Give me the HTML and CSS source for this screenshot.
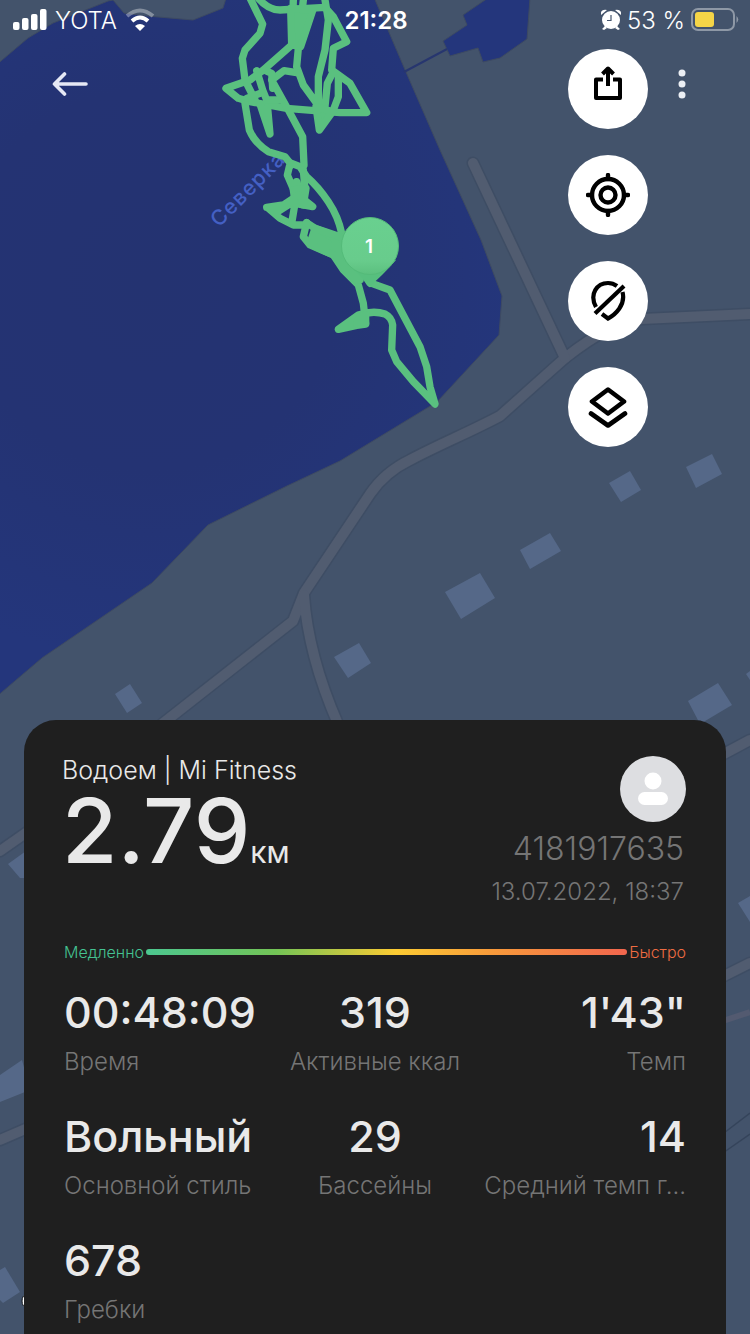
FILE: index.html
```html
<!DOCTYPE html>
<html lang="ru">
<head>
<meta charset="utf-8">
<meta name="viewport" content="width=device-width, initial-scale=1">
<title>Водоем | Mi Fitness</title>
<link rel="stylesheet" href="styles.css">
</head>
<body>
<div class="screen">
  <svg class="map" viewBox="0 0 750 1334" preserveAspectRatio="xMidYMin slice" role="img" aria-label="Карта заплыва">
    <defs>
      <radialGradient id="water" gradientUnits="userSpaceOnUse" cx="150" cy="280" r="380">
        <stop offset="0" stop-color="#243371"/>
        <stop offset=".5" stop-color="#243373"/>
        <stop offset="1" stop-color="#24367c"/>
      </radialGradient>
      <linearGradient id="pin" x1="0" y1="0" x2="0" y2="1">
        <stop offset="0" stop-color="#69d08f"/>
        <stop offset=".75" stop-color="#68cc8c"/>
        <stop offset="1" stop-color="#5cc07f"/>
      </linearGradient>
    </defs>
    <rect width="750" height="1334" fill="#43536b"/>
    <path class="water" fill="url(#water)" d="M-5 66 28 38 53 23 108 1 113 0 124 13 147 16 193 20 223 8 227 -5H373L400 58 406 72 440 150 481 240 502 296 499 335 437 402 340 461 287 486 208 525 152 583 42 658 -5 698Z"/>
    <path class="water" fill="#24367c" d="M488 -2 463 15 467 25 443 41 450 56 478 48 483 62 500 58 527 39 530 -2Z"/>
    <path d="M404 72 447 49" stroke="#27366f" stroke-width="2"/>
    <g class="road-edge">
      <path id="r1" d="M750 314 642 319 Q612 321 565 358L500 416C470 432 440 444 410 460 Q385 472 370 494L304 593 293 621 162 724"/>
      <path id="r2" d="M473 163 565 358"/>
      <path id="r3" d="M304 595 Q308 655 338 724"/>
      <path id="r4" d="M0 851 30 830M720 756 750 740M0 1140 30 1127M720 978 750 963"/>
    </g>
    <g class="road">
      <use href="#r1"/><use href="#r2"/><use href="#r3"/><use href="#r4"/>
    </g>
    <path d="M720 1022 750 1012" stroke="#535a70" stroke-width="6"/>
    <path d="M720 1136 750 1113M720 1155 750 1134" stroke="#35445b" stroke-width="1.5"/>
    <g fill="#556888">
      <path d="M609 483 630 471 641 490 621 502Z"/>
      <path d="M686 467 712 454 722 474 696 488Z"/>
      <path d="M520 550 550 533 561 551 530 569Z"/>
      <path d="M445 592 480 573 495 598 461 619Z"/>
      <path d="M334 657 359 643 371 663 348 678Z"/>
      <path d="M115 694 130 684 142 703 127 713Z"/>
      <path d="M688 701 718 683 732 705 700 724Z"/>
      <path d="M746 674 750 671V680Z"/>
      <path d="M8 864 26 851V878H20Z"/>
      <path d="M0 1075 22 1060 30 1090 0 1102Z"/>
      <path d="M0 1270 5 1267 20 1292 3 1303 0 1300Z"/>
      <path d="M738 903 750 896V922Z"/>
    </g>
    <ellipse cx="27" cy="1301" rx="5" ry="7" fill="#fff" stroke="#101418" stroke-width="1"/>
    <path id="river" d="M219 228 299 148" fill="none"/>
    <text class="river-name"><textPath href="#river">Северка</textPath></text>
    <g class="track" transform="translate(200 0) scale(.333333)">
      <path d="M148 -10Q165 25 188 72L180 100 135 150 127 175 135 240 165 300"/>
      <path d="M175 -5 Q205 30 240 30L375 22 400 50 440 125 400 145 395 210 450 250 500 338H420L260 325 150 305 115 295 78 265 150 240 190 210 275 135 280 0"/>
      <path d="M310 0 300 90 290 200 310 255 350 310M375 0 385 60 375 150 355 230V320"/>
      <path class="solid" d="M272 25 338 32 302 140 275 135Z"/>
      <path d="M400 215 382 250 375 320M415 235V290L400 330"/>
      <path class="solid" d="M348 320 398 335 358 390Z"/>
      <path d="M290 218 252 212 215 240 265 330 308 410 312 495M135 310 148 390Q165 430 205 455L255 470 275 495"/>
      <path d="M180 312 210 402 203 325M170 212 188 270 200 300 245 300M192 210 215 220 218 265M140 295 180 280"/>
      <path d="M275 490 300 500 320 530Q355 560 385 605 T425 700"/>
      <path d="M268 500 262 525 290 590M310 510 315 570 300 610M290 545 300 590"/>
      <path class="solid" d="M280 570 318 565 310 615 285 605Z"/>
      <path d="M200 622 250 615 295 585 338 620 285 610 275 670M205 625 240 655 280 675H320M225 640 265 615"/>
      <path d="M320 668 310 710 330 735 400 765 430 810 475 855 490 910 497 972 470 976 415 988 475 945 Q520 930 555 942 575 952 578 975L575 1050 590 1085 640 1145 705 1212 690 1160 680 1100 660 1040 570 870 515 850"/>
      <path d="M320 668 345 685 425 715 470 790 510 850"/>
      <path class="solid" d="M345 685 425 712 480 840 470 840 425 790 400 765 335 735 350 715 382 738 385 730 355 712 335 715Z"/>
      <path class="solid" d="M480 950 497 945V970L470 972Z"/>
    </g>
    <path fill="#57bf7e" d="M345 261Q358 274 370 286 382 276 396 260Z"/>
    <circle cx="370" cy="246" r="28.5" fill="url(#pin)" stroke="#54bb79" stroke-width="1"/>
    <text class="pin-number" x="369" y="253">1</text>
  </svg>

  <header class="status">
    <div class="status-side">
      <svg width="34" height="22" viewBox="0 0 34 22" fill="#fff" aria-hidden="true"><rect x="0" y="13" width="6.500" height="8" rx="2"/><rect x="9" y="9" width="6.500" height="12" rx="2"/><rect x="18" y="5" width="6.500" height="16" rx="2"/><rect x="27" y="0" width="6.500" height="21" rx="2"/></svg>
      <span>YOTA</span>
      <svg width="30" height="24" viewBox="0 0 30 24" fill="none" stroke="#fff" aria-hidden="true"><path d="M2 8Q15-3 28 8" stroke-width="4" opacity=".35"/><path d="M7 13Q15 6 23 13" stroke-width="4"/><path d="M15 23 10 18Q15 14 20 18Z" fill="#fff" stroke="none"/></svg>
    </div>
    <time class="clock">21:28</time>
    <div class="status-side status-right">
      <svg width="20" height="22" viewBox="0 0 20 22" fill="#fff" aria-hidden="true"><circle cx="10" cy="11" r="9"/><path d="M0 6Q-1 0 6 1ZM20 6Q21 0 14 1ZM4 17 1 20 3 21 6 19ZM16 17 19 20 17 21 14 19Z"/><path d="M10 6V11.500H6" fill="none" stroke="#43536b" stroke-width="1.200"/></svg>
      <span>53 %</span>
      <svg width="48" height="24" viewBox="0 0 48 24" aria-hidden="true"><rect x="1" y="1" width="42" height="21" rx="6" fill="none" stroke="#8e98a6" stroke-width="2"/><rect x="4" y="4" width="19" height="15" rx="3" fill="#f5d547"/><path d="M45.500 8Q49 11.500 45.500 15Z" fill="#8e98a6"/></svg>
    </div>
  </header>

  <nav class="toolbar">
    <button class="plain back" type="button" aria-label="Назад"><svg width="36" height="26" viewBox="0 0 36 26"><path d="M34 13H2.500M12.500 3 2.500 13 12.500 23" fill="none" stroke="#e6e9f5" stroke-width="3.600" stroke-linecap="round" stroke-linejoin="round"/></svg></button>
    <div class="actions">
      <button class="round share" type="button" aria-label="Поделиться"><svg width="30" height="36" viewBox="0 0 30 36"><path d="M10 14.500H3V33H27V14.500H20M15 21V4M9.500 9 15 3.500 20.500 9" fill="none" stroke="#000" stroke-width="4" stroke-linejoin="round"/></svg></button>
      <button class="round" type="button" aria-label="Моё местоположение"><svg width="44" height="44" viewBox="0 0 44 44"><g fill="none" stroke="#000" stroke-width="4.400"><circle cx="22" cy="22" r="16"/><circle cx="22" cy="22" r="7.500"/><path d="M22 2V6M22 38V42M2 22H6M38 22H42" stroke-linecap="round"/></g></svg></button>
      <button class="round" type="button" aria-label="Скрыть метки"><svg width="36" height="42" viewBox="0 0 36 42"><g fill="none" stroke="#000" stroke-width="4.200"><path d="M6 27C-1 14 7 3 18 3Q23 3 27 6"/><path d="M32.500 12C36 25 25 35 18 38.500L12 34"/><path d="M5 33.500 34 6"/></g></svg></button>
      <button class="round" type="button" aria-label="Слои карты"><svg width="40" height="42" viewBox="0 0 40 42"><path d="M20 3.500 36 15.500 20 27.500 4 15.500ZM3 27.500 20 39.500 37 27.500" fill="none" stroke="#000" stroke-width="4.600" stroke-linecap="round" stroke-linejoin="round"/></svg></button>
    </div>
    <button class="plain" type="button" aria-label="Ещё"><svg width="8" height="30" viewBox="0 0 8 30" fill="#eceff4"><circle cx="4" cy="4" r="3.500"/><circle cx="4" cy="15" r="3.500"/><circle cx="4" cy="26" r="3.500"/></svg></button>
  </nav>

  <main class="card">
    <div class="summary">
      <div>
        <h1 class="title">Водоем | Mi Fitness</h1>
        <p class="distance">2.79<span class="unit">км</span></p>
      </div>
      <div class="owner">
        <svg width="66" height="66" viewBox="0 0 66 66" role="img" aria-label="Профиль"><circle cx="33" cy="33" r="33" fill="#dddee1"/><circle cx="33" cy="25" r="8.500" fill="#fff"/><rect x="18" y="36" width="30" height="13" rx="6.500" fill="#fff"/></svg>
        <span class="user-id">4181917635</span>
        <time class="date" datetime="2022-07-13T18:37">13.07.2022, 18:37</time>
      </div>
    </div>

    <div class="pace">
      <span class="slow">Медленно</span>
      <span class="pace-bar"></span>
      <span class="fast">Быстро</span>
    </div>

    <dl class="stats">
      <div class="stat"><dt>Время</dt><dd>00:48:09</dd></div>
      <div class="stat"><dt>Активные ккал</dt><dd>319</dd></div>
      <div class="stat"><dt>Темп</dt><dd>1'43"</dd></div>
      <div class="stat"><dt>Основной стиль</dt><dd>Вольный</dd></div>
      <div class="stat"><dt>Бассейны</dt><dd>29</dd></div>
      <div class="stat"><dt>Средний темп г...</dt><dd>14</dd></div>
      <div class="stat"><dt>Гребки</dt><dd>678</dd></div>
    </dl>
  </main>
</div>
</body>
</html>
```
FILE: styles.css
```css
* { box-sizing: border-box; }

body {
  margin: 0;
  background: #43536b;
  color: #e9e9e9;
  font-family: Inter, "Noto Sans", sans-serif;
}

h1, p, dl, dd { margin: 0; }

.screen {
  position: relative;
  display: flex;
  flex-direction: column;
  min-height: 100vh;
  overflow: hidden;
}

/* Map lies under the whole interface */
.map {
  position: absolute;
  inset: 0;
  width: 100%;
  height: 100%;
}

.water { stroke: #3d4a62; stroke-width: 1; }
.road-edge { fill: none; stroke: #3e4d64; stroke-width: 13; stroke-linejoin: round; stroke-linecap: round; }
.road { fill: none; stroke: #515c70; stroke-width: 10; stroke-linejoin: round; stroke-linecap: round; }
.track { fill: none; stroke: #5ac07f; stroke-width: 22; stroke-linejoin: round; stroke-linecap: round; }
.solid { fill: #5ac07f; }

.river-name { fill: #4460c4; font-size: 21px; font-weight: 500; letter-spacing: 1px; }

.pin-number { fill: #fff; font-size: 19px; font-weight: 600; text-anchor: middle; }

.status {
  position: relative;
  display: grid;
  grid-template-columns: 1fr auto 1fr;
  align-items: center;
  height: 40px;
  padding: 0 11px 0 13px;
  color: #fff;
  font-size: 24px;
  font-weight: 300;
}

.status-side { display: flex; align-items: center; gap: 8px; }
.status-right { justify-content: flex-end; gap: 6px; }
.clock { font-weight: 600; }

.toolbar {
  position: relative;
  display: flex;
  align-items: flex-start;
  gap: 14px;
  padding: 9px 48px 0;
}

.plain, .round {
  display: flex;
  align-items: center;
  justify-content: center;
  padding: 0;
  border: 0;
  cursor: pointer;
}

.plain {
  width: 40px;
  height: 40px;
  margin-top: 15px;
  background: none;
}

.back { width: 44px; margin-right: auto; }

.actions { display: flex; flex-direction: column; gap: 26px; }

.round {
  width: 80px;
  height: 80px;
  border-radius: 50%;
  background: #fff;
}

.share { padding-bottom: 12px; }

.card {
  position: relative;
  margin: auto 24px 0;
  padding: 36px 40px 8px 38px;
  border-radius: 32px 32px 0 0;
  background: #1f1f1f;
}

.summary { display: flex; justify-content: space-between; }

.title { font-size: 25px; font-weight: 300; line-height: 28px; }
.distance { font-size: 90px; font-weight: 500; line-height: 94px; }
.unit { font-size: 30px; font-weight: 400; line-height: 1; }

.owner {
  display: flex;
  flex-direction: column;
  align-items: flex-end;
  gap: 7px;
  color: #757575;
  font-weight: 300;
}

.user-id, .date { padding-right: 2px; }
.user-id { font-size: 32px; line-height: 40px; }
.date { font-size: 24px; line-height: 32px; }

.pace, .stats { padding-left: 2px; }

.pace {
  display: flex;
  align-items: center;
  gap: 2px;
  margin-top: 34px;
  font-size: 16px;
  font-weight: 300;
  line-height: 20px;
}

.pace-bar {
  flex: 1;
  height: 6px;
  border-radius: 3px;
  background: linear-gradient(90deg, #4cc790, #73c456 27%, #fccb33 52%, #f79a3b 72%, #f2664e);
}

.slow { color: #44c292; }
.fast { color: #ee6c42; }

.stats {
  display: grid;
  grid-template-columns: repeat(3, minmax(0, 1fr));
  row-gap: 32px;
  margin-top: 24px;
}

.stat { display: flex; flex-direction: column-reverse; gap: 8px; }
.stat:nth-child(3n + 2) { text-align: center; }
.stat:nth-child(3n) { text-align: right; }

.stat dt {
  color: #757575;
  font-size: 24px;
  font-weight: 300;
  line-height: 32px;
  white-space: nowrap;
}

.stat dd {
  font-size: 43px;
  font-weight: 500;
  line-height: 52px;
  white-space: nowrap;
}
```
